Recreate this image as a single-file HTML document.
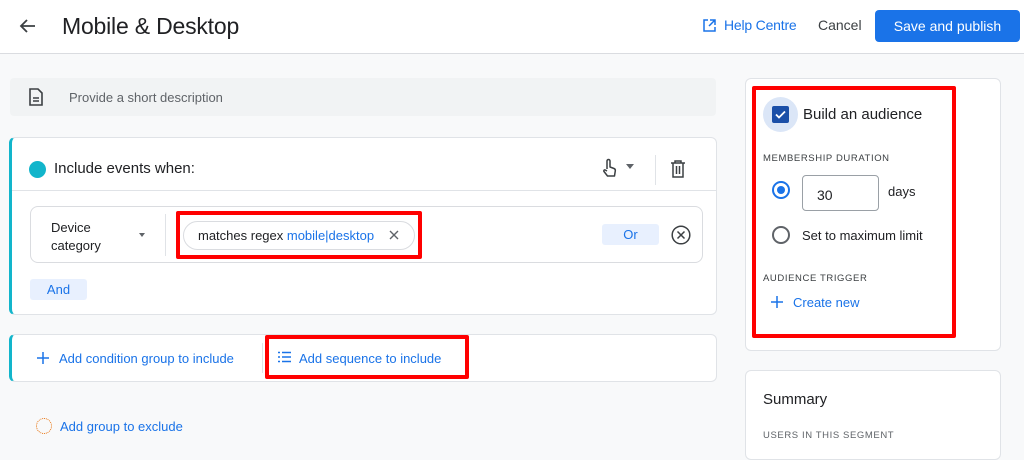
<!DOCTYPE html><html><head><style>
*{box-sizing:border-box;margin:0;padding:0}
body{width:1024px;height:446px;overflow:hidden;background:#f8f9fa;font-family:"Liberation Sans",sans-serif;color:#202124;position:relative}
.a{position:absolute}
.blue{color:#1a73e8}
</style></head><body>
<div class="a" style="left:0;top:0;width:1024px;height:54px;background:#fff;border-bottom:1px solid #dadce0"></div>
<svg class="a" style="left:18px;top:16px" width="20" height="20" viewBox="0 0 20 20"><path d="M17 10H4M9 4l-6 6 6 6" stroke="#3c4043" stroke-width="1.8" fill="none"/></svg>
<div class="a" style="left:62px;top:13px;font-size:23px;color:#202124;letter-spacing:-0.2px">Mobile &amp; Desktop</div>
<svg class="a" style="left:702px;top:18px" width="15" height="15" viewBox="0 0 15 15"><path d="M6 2H2v11h11V9M8 2h5v5M13 2L7 8" stroke="#1a73e8" stroke-width="1.5" fill="none"/></svg>
<div class="a blue" style="left:724px;top:17px;font-size:14px;letter-spacing:-0.2px">Help Centre</div>
<div class="a" style="left:818px;top:17px;font-size:14px;color:#3c4043">Cancel</div>
<div class="a" style="left:875px;top:10px;width:145px;height:32px;background:#1a73e8;border-radius:4px;color:#fff;font-size:14px;text-align:center;line-height:32px">Save and publish</div>

<div class="a" style="left:10px;top:78px;width:706px;height:38px;background:#f1f3f4;border-radius:4px"></div>
<svg class="a" style="left:29px;top:88px" width="14" height="18" viewBox="0 0 14 18"><path d="M1 1h8l4 4v12H1z M4 10h6M4 13h6" stroke="#3c4043" stroke-width="1.6" fill="none"/></svg>
<div class="a" style="left:69px;top:90px;font-size:13px;color:#5f6368">Provide a short description</div>

<div class="a" style="left:9px;top:137px;width:708px;height:178px;background:#fff;border:1px solid #e0e3e7;border-left:3px solid #12b5cb;border-radius:6px"></div>
<div class="a" style="left:12px;top:190px;width:704px;height:1px;background:#e0e3e7"></div>
<div class="a" style="left:29px;top:161px;width:17px;height:17px;border-radius:50%;background:#12b5cb"></div>
<div class="a" style="left:54px;top:160px;font-size:15px">Include events when:</div>
<svg class="a" style="left:601px;top:158px" width="16" height="20" viewBox="0 0 16 20"><path d="M6 11V3a1.5 1.5 0 013 0v6l4 1.5c1 .4 1.5 1.2 1.3 2.3L13.5 18H6.5L3 13.5c-.6-.8.3-2 1.3-1.5L6 13" stroke="#3c4043" stroke-width="1.5" fill="none" stroke-linejoin="round"/></svg>
<div class="a" style="left:626px;top:164px;width:0;height:0;border-left:4px solid transparent;border-right:4px solid transparent;border-top:5px solid #5f6368"></div>
<div class="a" style="left:655px;top:155px;width:1px;height:30px;background:#e0e3e7"></div>
<svg class="a" style="left:670px;top:160px" width="16" height="18" viewBox="0 0 16 18"><path d="M1 3h14M5 3V1h6v2M3 3v14h10V3M6.5 6v8M9.5 6v8" stroke="#3c4043" stroke-width="1.5" fill="none"/></svg>

<div class="a" style="left:30px;top:206px;width:673px;height:57px;border:1px solid #dadce0;border-radius:8px"></div>
<div class="a" style="left:51px;top:219px;font-size:13px;line-height:18px">Device<br>category</div>
<div class="a" style="left:139px;top:233px;width:0;height:0;border-left:3.5px solid transparent;border-right:3.5px solid transparent;border-top:4px solid #5f6368"></div>
<div class="a" style="left:165px;top:214px;width:1px;height:42px;background:#e0e3e7"></div>
<div class="a" style="left:176px;top:211px;width:246px;height:48px;border:4px solid #f00;border-radius:2px"></div>
<div class="a" style="left:183px;top:221px;width:232px;height:29px;border:1px solid #dadce0;border-radius:15px"></div>
<div class="a" style="left:198px;top:228px;font-size:13px">matches regex <span class="blue">mobile|desktop</span></div>
<svg class="a" style="left:389px;top:230px" width="10" height="10" viewBox="0 0 10 10"><path d="M1 1l8 8M9 1l-8 8" stroke="#5f6368" stroke-width="1.4"/></svg>
<div class="a blue" style="left:602px;top:224px;width:57px;height:21px;background:#e8f0fe;border-radius:3px;font-size:13px;text-align:center;line-height:21px">Or</div>
<svg class="a" style="left:671px;top:225px" width="20" height="20" viewBox="0 0 20 20"><circle cx="10" cy="10" r="8.8" stroke="#3c4043" stroke-width="1.5" fill="none"/><path d="M6.5 6.5l7 7M13.5 6.5l-7 7" stroke="#3c4043" stroke-width="1.5"/></svg>
<div class="a blue" style="left:30px;top:279px;width:57px;height:21px;background:#e8f0fe;border-radius:3px;font-size:13px;text-align:center;line-height:21px">And</div>

<div class="a" style="left:9px;top:334px;width:708px;height:48px;background:#fff;border:1px solid #e0e3e7;border-left:3px solid #12b5cb;border-radius:6px"></div>
<svg class="a" style="left:37px;top:352px" width="12" height="12" viewBox="0 0 12 12"><path d="M6 0v12M0 6h12" stroke="#1a73e8" stroke-width="1.5"/></svg>
<div class="a blue" style="left:59px;top:351px;font-size:13px">Add condition group to include</div>
<div class="a" style="left:262px;top:343px;width:1px;height:30px;background:#e0e3e7"></div>
<div class="a" style="left:265px;top:335px;width:204px;height:44px;border:4px solid #f00;border-radius:2px"></div>
<svg class="a" style="left:277px;top:351px" width="14" height="12" viewBox="0 0 14 12"><path d="M5 1.5h9M5 6h9M5 10.5h9M1 1.5h2M1 6h2M1 10.5h2" stroke="#1a73e8" stroke-width="1.4"/></svg>
<div class="a blue" style="left:299px;top:351px;font-size:13px">Add sequence to include</div>
<div class="a" style="left:36px;top:418px;width:16px;height:16px;border:1.5px dotted #e8710a;border-radius:50%"></div>
<div class="a blue" style="left:60px;top:419px;font-size:13px">Add group to exclude</div>

<div class="a" style="left:745px;top:78px;width:256px;height:273px;background:#fff;border:1px solid #e0e3e7;border-radius:6px"></div>
<div class="a" style="left:752px;top:86px;width:204px;height:252px;border:4px solid #f00;border-radius:2px"></div>
<div class="a" style="left:763px;top:97px;width:35px;height:35px;border-radius:50%;background:#dbe6f7"></div>
<div class="a" style="left:772px;top:106px;width:17px;height:17px;background:#1a4fa8;border-radius:2px"></div>
<svg class="a" style="left:772px;top:106px" width="17" height="17" viewBox="0 0 17 17"><path d="M4 8.5l3 3 6-6" stroke="#fff" stroke-width="1.8" fill="none"/></svg>
<div class="a" style="left:803px;top:106px;font-size:15px">Build an audience</div>
<div class="a" style="left:763px;top:153px;font-size:9.5px;letter-spacing:.6px;color:#3c4043">MEMBERSHIP DURATION</div>
<div class="a" style="left:772px;top:181px;width:18px;height:18px;border:2px solid #1a73e8;border-radius:50%"></div>
<div class="a" style="left:777px;top:186px;width:8px;height:8px;background:#1a73e8;border-radius:50%"></div>
<div class="a" style="left:802px;top:175px;width:77px;height:36px;border:1px solid #9aa0a6;border-radius:4px;font-size:14px;padding:11px 0 0 14px">30</div>
<div class="a" style="left:888px;top:184px;font-size:13px">days</div>
<div class="a" style="left:772px;top:226px;width:18px;height:18px;border:2px solid #5f6368;border-radius:50%"></div>
<div class="a" style="left:802px;top:228px;font-size:13px">Set to maximum limit</div>
<div class="a" style="left:763px;top:273px;font-size:9.5px;letter-spacing:.6px;color:#3c4043">AUDIENCE TRIGGER</div>
<svg class="a" style="left:771px;top:296px" width="12" height="12" viewBox="0 0 12 12"><path d="M6 0v12M0 6h12" stroke="#1a73e8" stroke-width="1.5"/></svg>
<div class="a blue" style="left:793px;top:295px;font-size:13px">Create new</div>

<div class="a" style="left:745px;top:370px;width:256px;height:90px;background:#fff;border:1px solid #e0e3e7;border-radius:6px"></div>
<div class="a" style="left:763px;top:391px;font-size:15px">Summary</div>
<div class="a" style="left:763px;top:430px;font-size:9.5px;letter-spacing:.6px;color:#5f6368">USERS IN THIS SEGMENT</div>
</body></html>
